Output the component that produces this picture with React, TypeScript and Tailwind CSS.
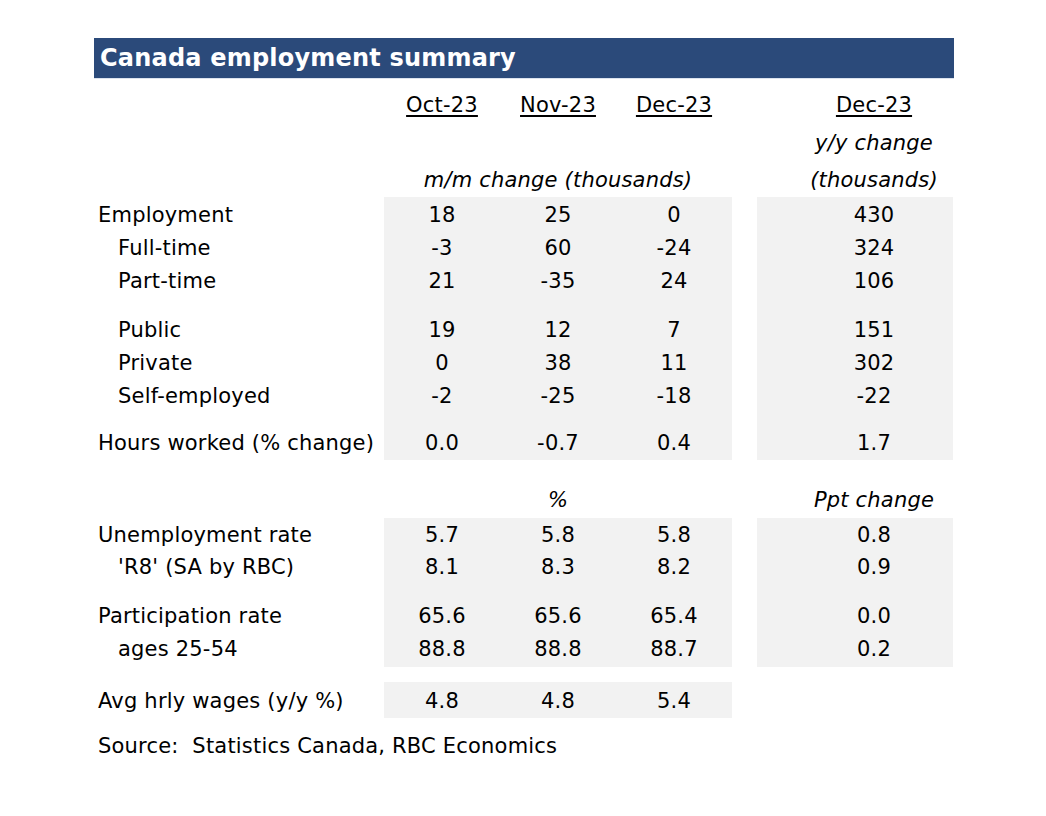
import React from "react";

type RowProps = {
  h: string;
  label?: string;
  indent?: boolean;
  v?: string[];
  r?: string;
  gray?: boolean;
  rightGray?: boolean;
  mid?: React.ReactNode;
  right?: React.ReactNode;
  cols?: React.ReactNode[];
};

function Row({ h, label, indent, v, r, gray, rightGray, mid, right, cols }: RowProps) {
  const hasText = !!(label || v || cols || mid || right || r);
  return (
    <div className={`flex items-center ${h}`}>
      <div className={`w-[290px] h-full flex items-center whitespace-pre ${hasText ? "pt-[3px]" : ""} ${indent ? "pl-[24px]" : "pl-[4px]"}`}>
        {label}
      </div>
      <div className={`w-[348px] h-full flex items-center ${hasText ? "pt-[3px]" : ""} ${gray ? "bg-[#f2f2f2]" : ""}`}>
        {mid ? (
          <div className="w-full text-center">{mid}</div>
        ) : (
          [0, 1, 2].map((i) => (
            <div key={i} className="w-[116px] text-center">
              {cols ? cols[i] : v ? v[i] : ""}
            </div>
          ))
        )}
      </div>
      <div className="w-[25px] h-full" />
      <div className={`w-[196px] h-full flex items-center pl-[38px] ${hasText ? "pt-[3px]" : ""} ${rightGray ? "bg-[#f2f2f2]" : ""}`}>
        <div className="w-full text-center">{right ?? r}</div>
      </div>
    </div>
  );
}

const U = ({ children }: { children: React.ReactNode }) => (
  <span className="underline decoration-[1.5px] underline-offset-[3px]">{children}</span>
);
const I = ({ children }: { children: React.ReactNode }) => <span className="italic">{children}</span>;

export default function App() {
  return (
    <div className="w-[1046px] h-[816px] bg-white pt-[38px] pl-[94px] text-[21px] tracking-[0.2px] text-black font-['DejaVu_Sans',sans-serif] leading-none">
      <div className="w-[860px]">
        <div className="h-[41px] bg-[#2b4a7a] flex items-center pl-[6px] text-white font-bold text-[24px] border-b border-[#dce3ee]">
          Canada employment summary
        </div>
        <div className="h-[6px]" />
        <Row h="h-[38px]" cols={[<U key="a">Oct-23</U>, <U key="b">Nov-23</U>, <U key="c">Dec-23</U>]} right={<U>Dec-23</U>} />
        <Row h="h-[38px]" right={<I>y/y change</I>} />
        <Row h="h-[36px]" mid={<I>m/m change (thousands)</I>} right={<I>(thousands)</I>} />

        <Row h="h-[33px]" gray rightGray label="Employment" v={["18", "25", "0"]} r="430" />
        <Row h="h-[33px]" gray rightGray indent label="Full-time" v={["-3", "60", "-24"]} r="324" />
        <Row h="h-[33px]" gray rightGray indent label="Part-time" v={["21", "-35", "24"]} r="106" />
        <Row h="h-[16px]" gray rightGray />
        <Row h="h-[33px]" gray rightGray indent label="Public" v={["19", "12", "7"]} r="151" />
        <Row h="h-[33px]" gray rightGray indent label="Private" v={["0", "38", "11"]} r="302" />
        <Row h="h-[33px]" gray rightGray indent label="Self-employed" v={["-2", "-25", "-18"]} r="-22" />
        <Row h="h-[14px]" gray rightGray />
        <Row h="h-[33px]" gray rightGray label="Hours worked (% change)" v={["0.0", "-0.7", "0.4"]} r="1.7" />
        <Row h="h-[2px]" gray rightGray />

        <div className="h-[20px]" />
        <Row h="h-[38px]" mid={<I>%</I>} right={<I>Ppt change</I>} />

        <Row h="h-[31px]" gray rightGray label="Unemployment rate" v={["5.7", "5.8", "5.8"]} r="0.8" />
        <Row h="h-[33px]" gray rightGray indent label="'R8' (SA by RBC)" v={["8.1", "8.3", "8.2"]} r="0.9" />
        <Row h="h-[16px]" gray rightGray />
        <Row h="h-[33px]" gray rightGray label="Participation rate" v={["65.6", "65.6", "65.4"]} r="0.0" />
        <Row h="h-[33px]" gray rightGray indent label="ages 25-54" v={["88.8", "88.8", "88.7"]} r="0.2" />
        <Row h="h-[3px]" gray rightGray />

        <div className="h-[15px]" />
        <Row h="h-[36px]" gray label="Avg hrly wages (y/y %)" v={["4.8", "4.8", "5.4"]} />
        <div className="h-[9px]" />
        <div className="h-[34px] flex items-center pl-[4px] pt-[4px] whitespace-pre">Source:  Statistics Canada, RBC Economics</div>
      </div>
    </div>
  );
}
